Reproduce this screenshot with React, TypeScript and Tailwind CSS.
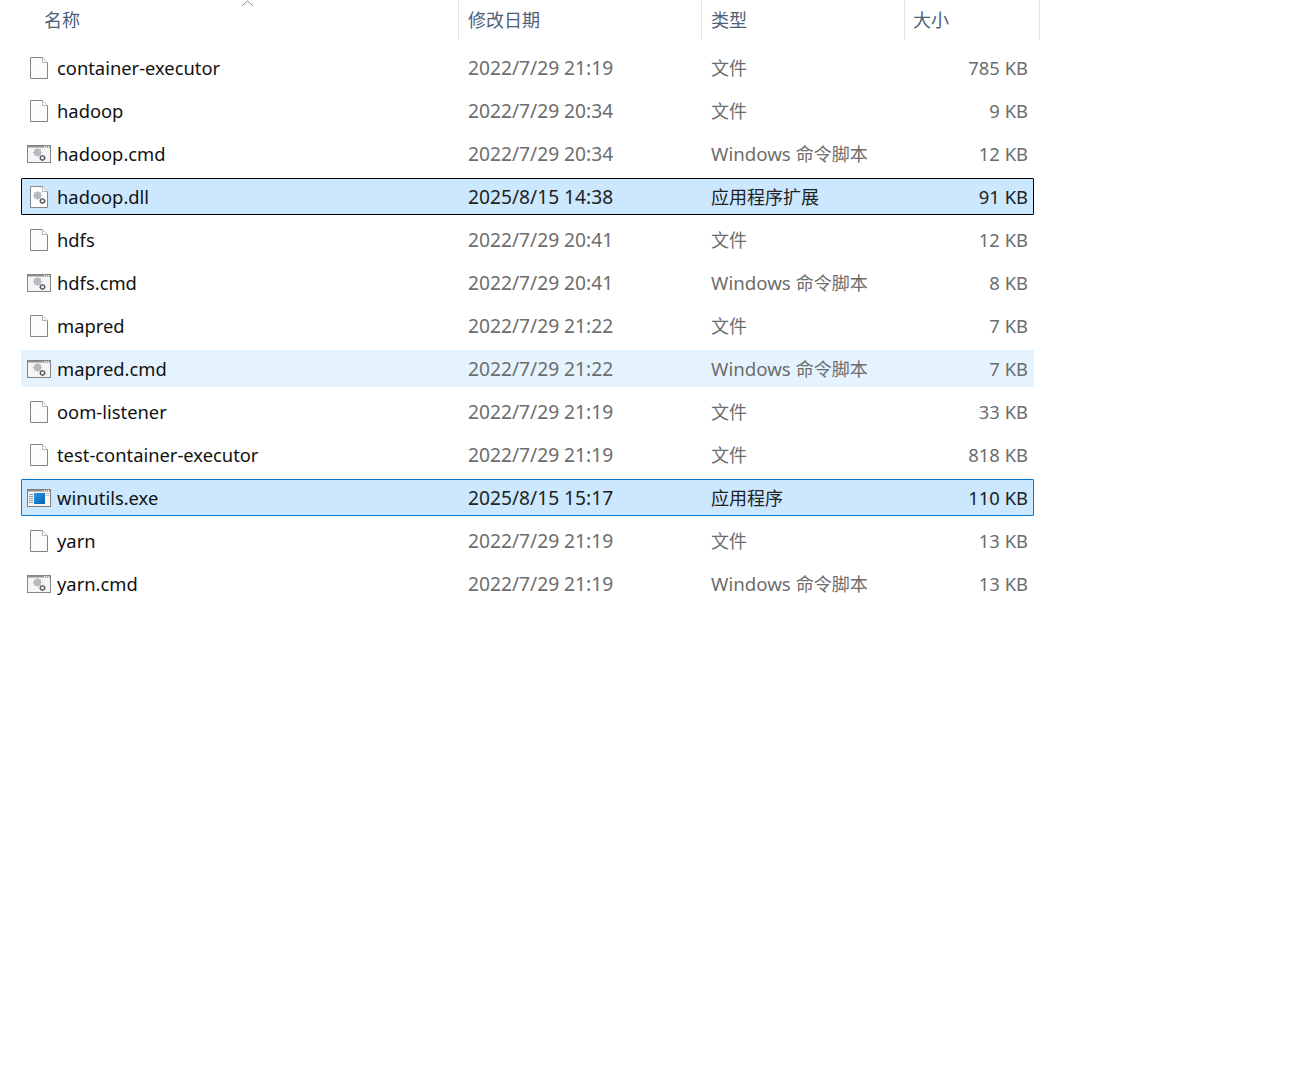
import React from "react";

type Kind = "file" | "cmd" | "dll" | "exe";
type Row = { name: string; date: string; type: string; size: string; kind: Kind; state?: "focus" | "sel" | "hover" };

const rows: Row[] = [
  { name: "container-executor", date: "2022/7/29 21:19", type: "文件", size: "785 KB", kind: "file" },
  { name: "hadoop", date: "2022/7/29 20:34", type: "文件", size: "9 KB", kind: "file" },
  { name: "hadoop.cmd", date: "2022/7/29 20:34", type: "命令脚本", size: "12 KB", kind: "cmd" },
  { name: "hadoop.dll", date: "2025/8/15 14:38", type: "应用程序扩展", size: "91 KB", kind: "dll", state: "focus" },
  { name: "hdfs", date: "2022/7/29 20:41", type: "文件", size: "12 KB", kind: "file" },
  { name: "hdfs.cmd", date: "2022/7/29 20:41", type: "命令脚本", size: "8 KB", kind: "cmd" },
  { name: "mapred", date: "2022/7/29 21:22", type: "文件", size: "7 KB", kind: "file" },
  { name: "mapred.cmd", date: "2022/7/29 21:22", type: "命令脚本", size: "7 KB", kind: "cmd", state: "hover" },
  { name: "oom-listener", date: "2022/7/29 21:19", type: "文件", size: "33 KB", kind: "file" },
  { name: "test-container-executor", date: "2022/7/29 21:19", type: "文件", size: "818 KB", kind: "file" },
  { name: "winutils.exe", date: "2025/8/15 15:17", type: "应用程序", size: "110 KB", kind: "exe", state: "sel" },
  { name: "yarn", date: "2022/7/29 21:19", type: "文件", size: "13 KB", kind: "file" },
  { name: "yarn.cmd", date: "2022/7/29 21:19", type: "命令脚本", size: "13 KB", kind: "cmd" },
];

function Gears({ x, y }: { x: number; y: number }) {
  return (
    <g transform={`translate(${x} ${y})`}>
      <circle cx="4.5" cy="4.5" r="2.6" fill="none" stroke="#b4bac0" strokeWidth="2.2" />
      <path d="M4.5 0v9M0 4.5h9M1.3 1.3l6.4 6.4M7.7 1.3l-6.4 6.4" stroke="#b4bac0" strokeWidth="1.1" />
      <circle cx="9.5" cy="10" r="2.1" fill="#fff" stroke="#55585c" strokeWidth="1.4" />
      <path d="M9.5 7v1M9.5 12v1M6.500 10h1M11.500 10h1" stroke="#55585c" strokeWidth="0.9" />
    </g>
  );
}

function Icon({ kind }: { kind: Kind }) {
  if (kind === "file" || kind === "dll") {
    return (
      <svg width="24" height="24" viewBox="0 0 24 24" className="shrink-0">
        <path d="M3.500 1.500h12l5 5v16h-17z" fill={kind === "dll" ? "#fff" : "#fbfbfb"} stroke="#858585" />
        <path d="M15.500 1.500v5h5" fill="#fff" stroke="#b5b5b5" />
        {kind === "dll" && <Gears x={6} y={6} />}
      </svg>
    );
  }
  if (kind === "cmd") {
    return (
      <svg width="24" height="24" viewBox="0 0 24 24" className="shrink-0">
        <rect x="0.5" y="3.5" width="23" height="17" fill="#f5f5f5" stroke="#858585" />
        <rect x="1" y="4" width="22" height="1.5" fill="#8f8f8f" />
        <path d="M17 4.500h1M19 4.500h1M21 4.500h1" stroke="#fff" />
        <Gears x={6} y={6} />
      </svg>
    );
  }
  return (
    <svg width="24" height="24" viewBox="0 0 24 24" className="shrink-0">
      <defs>
        <linearGradient id="exe" x1="0" y1="0" x2="1" y2="1">
          <stop offset="0" stopColor="#2a9bea" />
          <stop offset="1" stopColor="#0a5fb4" />
        </linearGradient>
      </defs>
      <rect x="0.5" y="3.5" width="23" height="17" fill="#f7f7f7" stroke="#7f7f7f" />
      <rect x="1" y="4" width="22" height="1.5" fill="#8a8a8a" />
      <path d="M17 4.500h1M19 4.500h1M21 4.500h1" stroke="#fff" />
      <path d="M2 8.500h4M2 10.500h4M2 12.500h4M2 14.500h4M2 16.500h4" stroke="#9a9a9a" />
      <path d="M18.500 7.500h4M18.500 9.500h4" stroke="#c9c9c9" />
      <rect x="7" y="7" width="11" height="11" fill="url(#exe)" />
    </svg>
  );
}

const font = { fontFamily: '"Noto Sans", "Noto Sans CJK SC", sans-serif' };

export default function App() {
  return (
    <div className="w-[1293px] h-[1073px] bg-white overflow-hidden text-[18px] leading-none" style={font}>
      <div className="relative flex h-10 text-[#4c607a] mb-[9px]">
        <div className="w-[459px] pl-[44px] pt-[11px] border-r border-[#e5e5e5]">名称</div>
        <div className="w-[243px] pl-[9px] pt-[11px] border-r border-[#e5e5e5]">修改日期</div>
        <div className="w-[203px] pl-[9px] pt-[11px] border-r border-[#e5e5e5]">类型</div>
        <div className="w-[135px] pl-[8px] pt-[11px] border-r border-[#e5e5e5]">大小</div>
        <svg width="13" height="7" viewBox="0 0 13 7" className="absolute left-[241px] top-0">
          <path d="M1 6l5.500-5L12 6" fill="none" stroke="#8a8a8a" />
        </svg>
      </div>
      <div className="flex flex-col gap-[6px] ml-[21px] w-[1013px]">
        {rows.map((r) => {
          const box =
            r.state === "focus"
              ? "bg-[#cce8ff] border-black"
              : r.state === "sel"
                ? "bg-[#cce8ff] border-[#0078d7]"
                : r.state === "hover"
                  ? "bg-[#e5f3ff] border-transparent"
                  : "border-transparent";
          const active = r.state === "focus" || r.state === "sel";
          const sub = active ? "text-[#222]" : "text-[#6d6d6d]";
          return (
            <div key={r.name} className={`flex items-center h-[37px] border rounded-[1px] ${box}`}>
              <div className="w-[5px]" />
              <Icon kind={r.kind} />
              <div className="w-[417px] pl-[6px] pt-[2px] text-[18.35px] text-[#111]">{r.name}</div>
              <div className={`w-[243px] text-[19.2px] ${sub}`}>{r.date}</div>
              <div className={`w-[203px] ${r.kind === "cmd" ? "pt-[2px]" : ""} ${sub}`}>
                {r.kind === "cmd" && <span className="text-[18.7px]">Windows </span>}
                {r.type}
              </div>
              <div className={`w-[114px] pt-[2px] text-right text-[18.4px] ${sub}`}>{r.size}</div>
            </div>
          );
        })}
      </div>
    </div>
  );
}
